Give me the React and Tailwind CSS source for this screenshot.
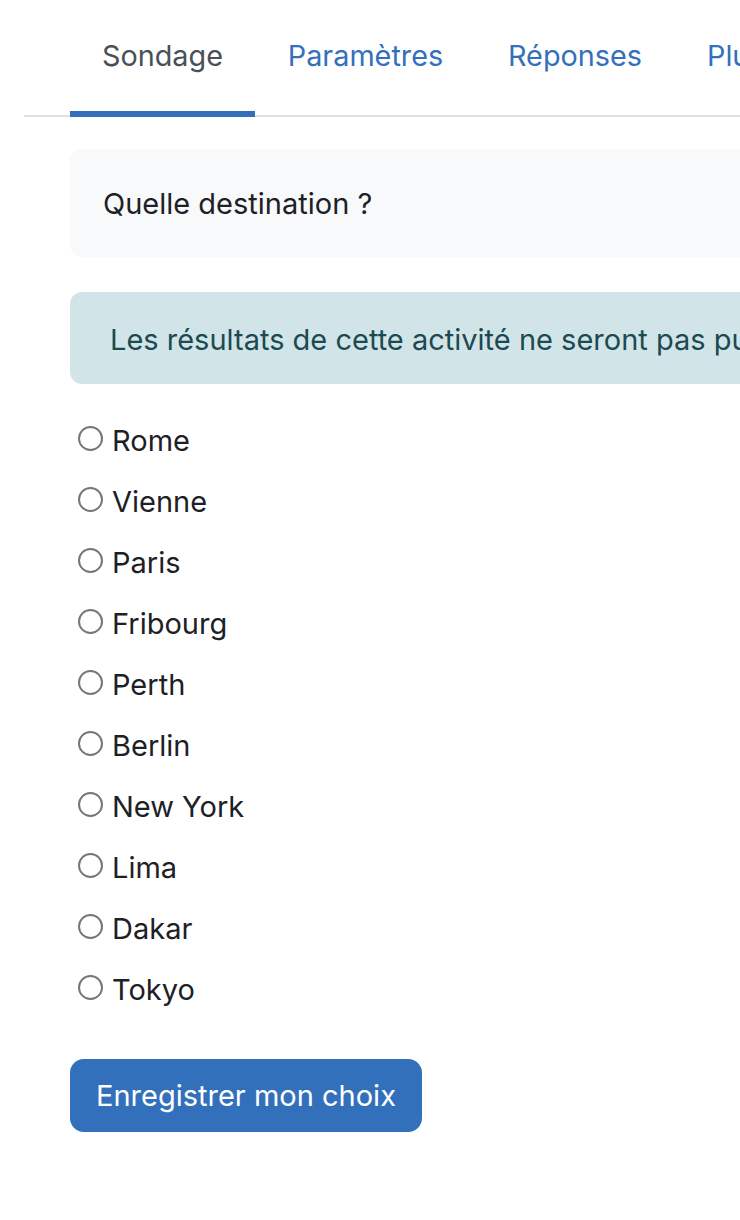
export default function App() {
  const options = ["Rome", "Vienne", "Paris", "Fribourg", "Perth", "Berlin", "New York", "Lima", "Dakar", "Tokyo"];
  return (
    <div className="w-[740px] h-[1220px] overflow-hidden bg-white" style={{ fontFamily: "Inter, 'Noto Sans', sans-serif" }}>
      <div className="w-[1200px] pl-[24px]">
        <div className="flex border-b-2 border-[#dee2e6] pl-[46px] h-[117px]">
          <div className="mb-[-2px] border-b-[6px] border-[#3370bb] w-[185px] flex items-center justify-center pt-[1px] text-[28.8px] text-[#495057]">Sondage</div>
          <div className="mb-[-2px] border-b-[6px] border-transparent w-[221px] flex items-center justify-center pt-[1px] text-[28.8px] text-[#3370bb]">Paramètres</div>
          <div className="mb-[-2px] border-b-[6px] border-transparent w-[198px] flex items-center justify-center pt-[1px] text-[28.8px] text-[#3370bb]">Réponses</div>
          <div className="mb-[-2px] border-b-[6px] border-transparent flex items-center pl-[33px] pr-[33px] pt-[1px] text-[28.8px] text-[#3370bb]">Plus</div>
        </div>
        <div className="pl-[46px]">
          <div className="mt-[32px] h-[108px] rounded-[12px] bg-[#f8f9fa] flex items-center pl-[33px] pt-[2px] text-[29px] text-[#1d2125]">Quelle destination ?</div>
          <div className="mt-[35px] h-[92px] rounded-[12px] bg-[#d1e5e8] flex items-center pl-[40px] pt-[4px] text-[29px] text-[#1c4a52] whitespace-nowrap">Les résultats de cette activité ne seront pas publiés après votre réponse.</div>
          <div className="mt-[26px] flex flex-col">
            {options.map((o) => (
              <div key={o} className="h-[61px] flex items-center pl-[8px] text-[29px] text-[#1d2125]">
                <span className="w-[25px] h-[25px] rounded-full border-2 border-[#767676] bg-white mr-[9px] mt-[-4px] shrink-0"></span>
                <span>{o}</span>
              </div>
            ))}
          </div>
          <button className="mt-[39px] h-[73px] px-[26px] rounded-[14px] bg-[#3370bb] text-white text-[29px]">Enregistrer mon choix</button>
        </div>
      </div>
    </div>
  );
}
